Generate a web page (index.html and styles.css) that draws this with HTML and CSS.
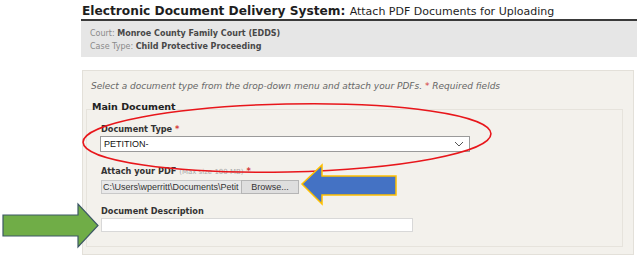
FILE: index.html
```html
<!DOCTYPE html>
<html lang="en">
<head>
    <meta charset="UTF-8">
    <title>EDDS - Attach PDF Documents</title>
    <link rel="stylesheet" href="styles.css">
</head>
<body>
    <div class="page">
        <h1 class="title">Electronic Document Delivery System: <span class="subtitle">Attach PDF Documents for Uploading</span></h1>
        <div class="case-info">
            <div><span class="info-label">Court:</span> <b>Monroe County Family Court (EDDS)</b></div>
            <div><span class="info-label">Case Type:</span> <b>Child Protective Proceeding</b></div>
        </div>
        <div class="panel">
            <p class="hint">Select a document type from the drop-down menu and attach your PDFs. <span class="req">*</span> Required fields</p>
            <h2 class="section">Main Document</h2>
            <div class="inner">
                <label class="field-label">Document Type <span class="req">*</span></label>
                <div class="select">
                    <span>PETITION-</span>
                    <svg class="chevron" width="10" height="6" viewBox="0 0 10 6"><path d="M1 1 L5 5 L9 1" fill="none" stroke="#555" stroke-width="1"/></svg>
                </div>

                <label class="field-label">Attach your PDF <span class="note">(Max size 100 MB)</span> <span class="req">*</span></label>
                <div class="file">
                    <span class="file-path">C:\Users\wperritt\Documents\Petit</span>
                    <span class="browse">Browse...</span>
                </div>

                <label class="field-label">Document Description</label>
                <div class="text-input"></div>
            </div>
        </div>
    </div>

    <!-- slide annotations drawn over the form -->
    <svg class="marks" width="643" height="256" viewBox="0 0 643 256">
        <ellipse cx="287" cy="138" rx="204" ry="34" transform="rotate(-1.2 287 138)" fill="none" stroke="#e8161b" stroke-width="1.6"/>
        <polygon points="302,184 322,165 322,176 396,176 396,195 322,195 322,204" fill="#4472c4" stroke="#ffc000" stroke-width="1.5"/>
        <polygon points="3,215 78,215 78,204 98,225.5 78,247 78,236 3,236" fill="#70ad47" stroke="#3d5866" stroke-width="1.2"/>
    </svg>
</body>
</html>
```

FILE: styles.css
```css
body {
    margin: 0;
    background: #fff;
    font-family: "DejaVu Sans", Verdana, sans-serif;
    color: #222;
}
.page {
    padding: 4px 6px 0 81px;
}
.title {
    margin: 0;
    font-size: 12.2px;
    font-weight: bold;
    line-height: 15px;
    padding-left: 1px;
    border-bottom: 2px solid #3a3a3a;
    color: #1e1e1e;
}
.subtitle {
    font-weight: normal;
    font-size: 11px;
}
.case-info {
    background: #e6e6e6;
    height: 36px;
    box-sizing: border-box;
    padding: 6px 9px;
    font-size: 8px;
    line-height: 13px;
    color: #8a8a8a;
}
.case-info b {
    color: #484848;
}
.panel {
    margin: 13px 3px 0 1px;
    background: #f3f1ec;
    border: 1px solid #e3e0d9;
    padding: 7px 10px 6px 3px;
    height: 185px;
    box-sizing: border-box;
}
.hint {
    margin: 3px 0 0 5px;
    font-size: 9px;
    font-style: italic;
    color: #666;
}
.req {
    color: #d43a3a;
    font-style: normal;
}
.section {
    margin: 9px 0 0 6px;
    font-size: 9.5px;
    line-height: 13px;
    color: #222;
}
.inner {
    border: 1px solid #e6e3dc;
    margin-top: -4px;
    padding: 13px 14px 10px 14px;
    height: 138px;
    box-sizing: border-box;
}
.field-label {
    display: block;
    font-size: 8.2px;
    font-weight: bold;
    line-height: 12px;
    color: #333;
}
.note {
    font-weight: normal;
    font-size: 7px;
    color: #aaa;
}
.select {
    display: flex;
    justify-content: space-between;
    align-items: center;
    width: 370px;
    height: 16px;
    margin: 1px 0 13px -1px;
    box-sizing: border-box;
    border: 1px solid #9a9a9a;
    background: #fff;
    padding: 0 5px 0 3px;
    font-family: "Liberation Sans", Arial, sans-serif;
    font-size: 9px;
    color: #111;
}
.file {
    display: flex;
    height: 14px;
    margin: 2px 0 11px 0;
    font-family: "Liberation Sans", Arial, sans-serif;
    font-size: 9px;
}
.file-path {
    width: 140px;
    box-sizing: border-box;
    overflow: hidden;
    white-space: nowrap;
    background: #e9e9e9;
    color: #333;
    border: 1px solid #c9c9c9;
    border-right: none;
    padding-left: 1px;
    line-height: 12px;
}
.browse {
    width: 58px;
    box-sizing: border-box;
    text-align: center;
    background: #dedede;
    border: 1px solid #b5b5b5;
    color: #333;
    line-height: 12px;
}
.text-input {
    width: 312px;
    height: 14px;
    margin-top: 1px;
    box-sizing: border-box;
    background: #fff;
    border: 1px solid #d8d8d8;
}
.marks {
    position: absolute;
    top: 0;
    left: 0;
    pointer-events: none;
}
```
